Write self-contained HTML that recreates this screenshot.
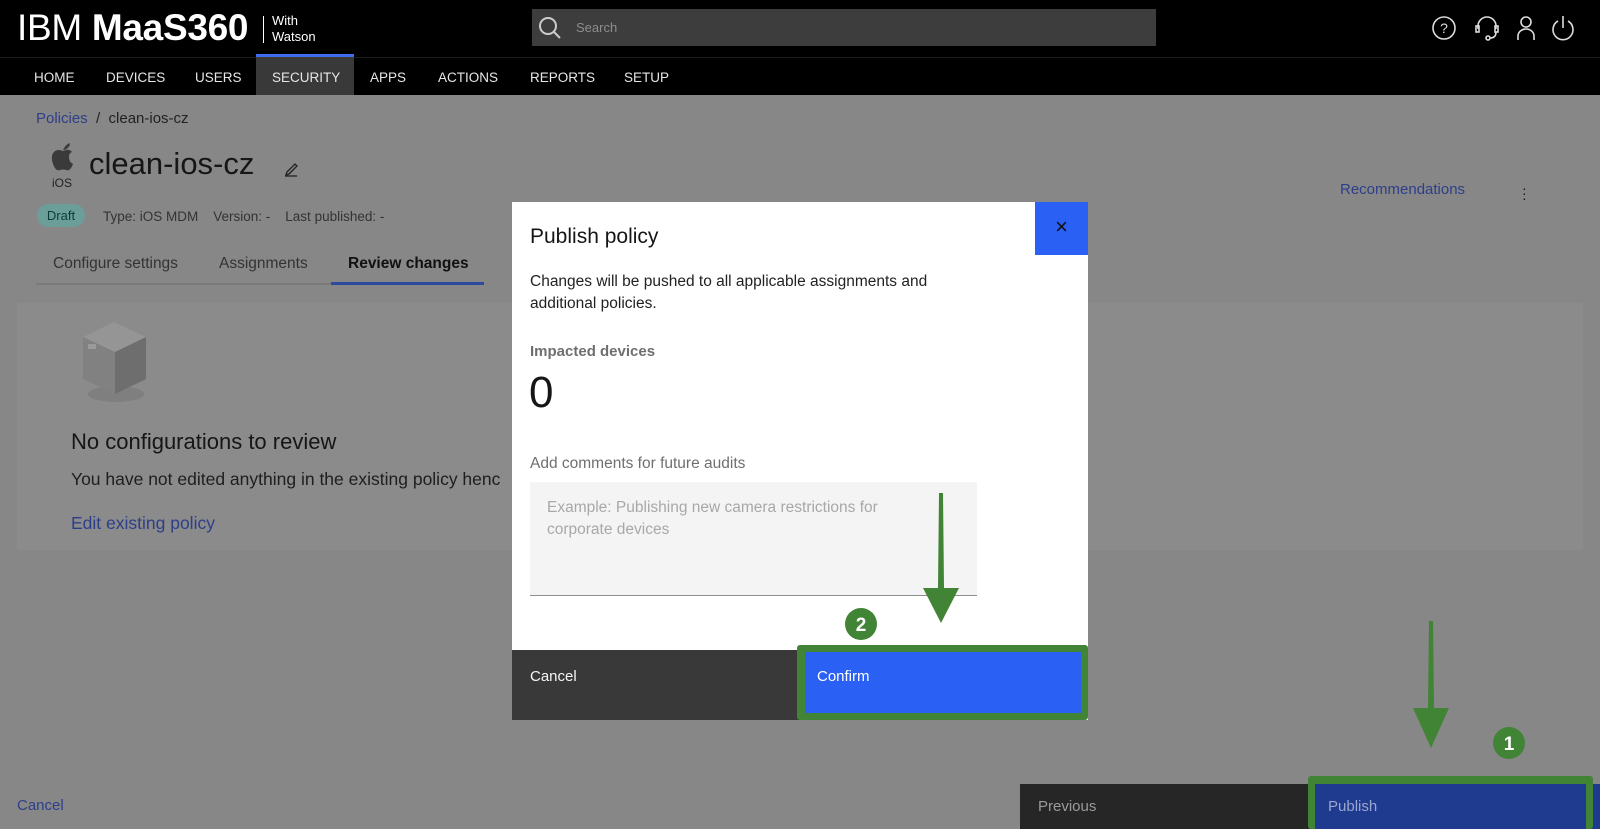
<!DOCTYPE html>
<html><head><meta charset="utf-8"><style>
*{margin:0;padding:0;box-sizing:border-box}
body{width:1600px;height:829px;overflow:hidden;background:#878787;font-family:"Liberation Sans",sans-serif;position:relative}
.a{position:absolute;white-space:nowrap}
.nav span{position:absolute;top:70px;color:#e6e6e6;font-size:13.5px}
</style></head><body>
<div class="a" style="left:0;top:0;width:1600px;height:57px;background:#000"></div>
<div class="a" style="left:0;top:57px;width:1600px;height:1px;background:#1c1c1c"></div>
<div class="a" style="left:0;top:58px;width:1600px;height:37px;background:#000"></div>
<div class="a" style="left:17px;top:7px;color:#fff;font-size:37px;letter-spacing:-0.3px">IBM <b>MaaS360</b></div>
<div class="a" style="left:263px;top:16px;width:1px;height:27px;background:#fff"></div>
<div class="a" style="left:272px;top:13px;color:#fff;font-size:13px;line-height:16px">With<br>Watson</div>
<div class="a" style="left:532px;top:9px;width:624px;height:37px;background:#3d3d3d"></div>
<svg class="a" style="left:537px;top:15px" width="26" height="26" viewBox="0 0 26 26"><circle cx="11" cy="11" r="8" fill="none" stroke="#ccc" stroke-width="2"/><line x1="17" y1="17" x2="23" y2="23" stroke="#ccc" stroke-width="2"/></svg>
<div class="a" style="left:576px;top:20px;color:#8d8d8d;font-size:13px">Search</div>
<svg class="a" style="left:1432px;top:15px" width="150" height="26" viewBox="0 0 150 26" fill="none" stroke="#ddd" stroke-width="1.6">
<circle cx="12" cy="13" r="11"/><text x="12" y="18" font-size="14" fill="#ddd" stroke="none" text-anchor="middle" font-family="Liberation Sans">?</text>
<path d="M46 14 v-3 a9 9 0 0 1 18 0 v3"/><rect x="44" y="11" width="3" height="6"/><rect x="63" y="11" width="3" height="6"/><path d="M64 17 q0 6 -6 6"/><circle cx="56" cy="23" r="2"/>
<circle cx="94" cy="7" r="5"/><path d="M86 25 v-4 a8 7 0 0 1 16 0 v4"/>
<path d="M126 6 a10 10 0 1 0 10 0"/><line x1="131" y1="1" x2="131" y2="13"/></svg>
<div class="a" style="left:256px;top:54px;width:98px;height:41px;background:#393939;border-top:3px solid #3f6cf0"></div>
<div class="nav"><span style="left:34px">HOME</span><span style="left:106px">DEVICES</span><span style="left:195px">USERS</span><span style="left:272px">SECURITY</span><span style="left:370px">APPS</span><span style="left:438px">ACTIONS</span><span style="left:530px">REPORTS</span><span style="left:624px">SETUP</span></div>

<div class="a" style="left:36px;top:110px;font-size:15px;color:#2d3f8a">Policies <span style="color:#222">&nbsp;/&nbsp; clean-ios-cz</span></div>
<svg class="a" style="left:50px;top:142px" width="26" height="30" viewBox="0 0 26 30"><path d="M13 8 q3 -6 7 -7 q0 5 -6 7z" fill="#3a3a3a"/><path d="M13 9 q-4 -2 -8 0 q-5 4 -2 13 q3 8 7 6 q3 -1 6 0 q4 2 7 -6 q-4 -2 -4 -7 q0 -4 3 -5 q-3 -4 -9 -1z" fill="#3a3a3a"/></svg>
<div class="a" style="left:52px;top:176px;font-size:12px;color:#222">iOS</div>
<div class="a" style="left:89px;top:146px;font-size:31px;color:#161616">clean-ios-cz</div>
<svg class="a" style="left:283px;top:161px" width="16" height="16" viewBox="0 0 16 16" fill="none" stroke="#222" stroke-width="1.3"><path d="M4 11 l8 -8 l2 2 l-8 8 l-3 1z"/><line x1="2" y1="15" x2="14" y2="15"/></svg>
<div class="a" style="left:37px;top:204px;width:48px;height:23px;border-radius:12px;background:#6b9e99;color:#0d3b38;font-size:13px;text-align:center;line-height:23px">Draft</div>
<div class="a" style="left:103px;top:209px;font-size:13.5px;color:#333">Type: iOS MDM &nbsp;&nbsp; Version: - &nbsp;&nbsp; Last published: -</div>
<div class="a" style="left:53px;top:255px;font-size:15.5px;color:#333">Configure settings</div>
<div class="a" style="left:219px;top:255px;font-size:15.5px;color:#333">Assignments</div>
<div class="a" style="left:348px;top:255px;font-size:15.5px;color:#111;font-weight:bold">Review changes</div>
<div class="a" style="left:36px;top:283px;width:295px;height:2px;background:#7a7a7a"></div>
<div class="a" style="left:331px;top:282px;width:153px;height:3px;background:#2d4a9e"></div>
<div class="a" style="left:1340px;top:181px;font-size:15px;color:#2d3f8a">Recommendations</div>
<div class="a" style="left:1522px;top:186px;font-size:14px;color:#111;line-height:5px">·<br>·<br>·</div>

<div class="a" style="left:17px;top:303px;width:1566px;height:247px;background:#8b8b8b"></div>
<svg class="a" style="left:80px;top:322px" width="72" height="86" viewBox="0 0 72 86"><ellipse cx="36" cy="72" rx="28" ry="8" fill="#7f7f7f"/><path d="M3 15 L34 0 L66 15 L35 30z" fill="#959595"/><path d="M3 15 L35 30 L35 72 L3 57z" fill="#818181"/><path d="M35 30 L66 15 L66 57 L35 72z" fill="#6e6e6e"/><rect x="8" y="22" width="8" height="5" fill="#9a9a9a"/></svg>
<div class="a" style="left:71px;top:429px;font-size:22px;color:#161616">No configurations to review</div>
<div class="a" style="left:71px;top:469px;font-size:17.5px;color:#1e1e1e">You have not edited anything in the existing policy henc</div>
<div class="a" style="left:71px;top:513px;font-size:17.5px;color:#2d3f8a">Edit existing policy</div>

<div class="a" style="left:512px;top:202px;width:576px;height:518px;background:#fff"></div>
<div class="a" style="left:1035px;top:202px;width:53px;height:53px;background:#2b60f5;color:#111;font-size:22px;text-align:center;line-height:50px">×</div>
<div class="a" style="left:530px;top:225px;font-size:21px;color:#161616">Publish policy</div>
<div class="a" style="left:530px;top:271px;font-size:15.5px;color:#222;line-height:22px">Changes will be pushed to all applicable assignments and<br>additional policies.</div>
<div class="a" style="left:530px;top:343px;font-size:15px;color:#6f6f6f;font-weight:bold">Impacted devices</div>
<div class="a" style="left:529px;top:368px;font-size:44px;color:#161616;font-weight:300">0</div>
<div class="a" style="left:530px;top:455px;font-size:15.5px;color:#6f6f6f">Add comments for future audits</div>
<div class="a" style="left:530px;top:482px;width:447px;height:114px;background:#f4f4f4;border-bottom:1px solid #8d8d8d"></div>
<div class="a" style="left:547px;top:497px;font-size:15.5px;color:#a8a8a8;line-height:22px">Example: Publishing new camera restrictions for<br>corporate devices</div>
<div class="a" style="left:512px;top:650px;width:290px;height:70px;background:#393939"></div>
<div class="a" style="left:530px;top:668px;font-size:15px;color:#f4f4f4">Cancel</div>
<div class="a" style="left:797px;top:645px;width:291px;height:75px;background:#418436;border-radius:3px"></div>
<div class="a" style="left:805px;top:652px;width:276px;height:61px;background:#2b60f5"></div>
<div class="a" style="left:817px;top:668px;font-size:15px;color:#fff">Confirm</div>
<svg class="a" style="left:840px;top:490px" width="120" height="155" viewBox="0 0 120 155"><path d="M99 3 L103 3 L104 98 L119 98 L101 133 L83 98 L98 98z" fill="#418436"/><circle cx="21" cy="134" r="16" fill="#418436"/><text x="21" y="141" font-size="19" font-weight="bold" fill="#fff" text-anchor="middle" font-family="Liberation Sans">2</text></svg>

<div class="a" style="left:17px;top:797px;font-size:15px;color:#2d3f8a">Cancel</div>
<div class="a" style="left:1020px;top:784px;width:580px;height:45px;background:#262626"></div>
<div class="a" style="left:1038px;top:798px;font-size:15px;color:#9a9a9a">Previous</div>
<div class="a" style="left:1592px;top:784px;width:8px;height:45px;background:#1f3b8f"></div>
<div class="a" style="left:1308px;top:776px;width:285px;height:53px;background:#418436;border-radius:3px"></div>
<div class="a" style="left:1315px;top:784px;width:271px;height:45px;background:#1f3b8f"></div>
<div class="a" style="left:1328px;top:798px;font-size:15px;color:#9aa6cc">Publish</div>
<svg class="a" style="left:1410px;top:618px" width="120" height="145" viewBox="0 0 120 145"><path d="M19 3 L23 3 L24 90 L39 90 L21 130 L3 90 L18 90z" fill="#418436"/><circle cx="99" cy="125" r="16" fill="#418436"/><text x="99" y="132" font-size="19" font-weight="bold" fill="#fff" text-anchor="middle" font-family="Liberation Sans">1</text></svg>
</body></html>
